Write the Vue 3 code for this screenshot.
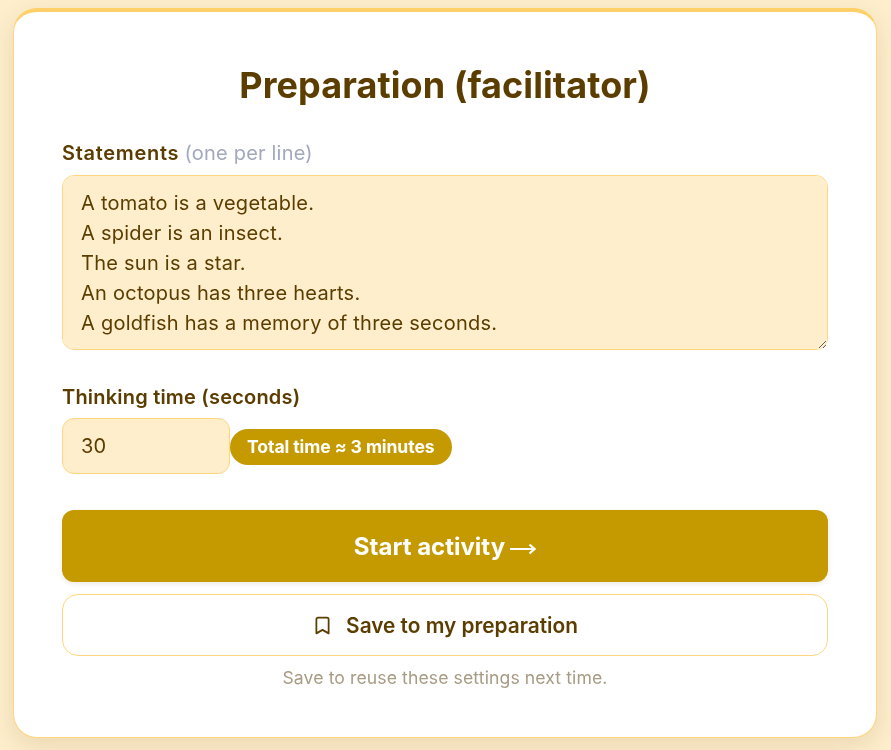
<script setup>
import { ref } from 'vue'

const statements = ref(`A tomato is a vegetable.
A spider is an insect.
The sun is a star.
An octopus has three hearts.
A goldfish has a memory of three seconds.`)
const seconds = ref(30)
</script>

<template>
  <div class="page">
    <main class="card">
      <h1>Preparation (facilitator)</h1>

      <label class="label" for="statements"><span class="wide">Statements</span> <span class="hint">(one per line)</span></label>
      <textarea id="statements" v-model="statements" class="field statements" spellcheck="false"></textarea>

      <label class="label time-label" for="seconds">Thinking time (seconds)</label>
      <div class="time-row">
        <input id="seconds" v-model="seconds" class="field seconds" type="text">
        <span class="badge">Total time ≈ 3 minutes</span>
      </div>

      <button class="start-btn">
        <span>Start activity</span>
        <svg class="arrow" width="26" height="12" viewBox="0 0 26 12" fill="none" stroke="currentColor" stroke-width="2.2">
          <path d="M0 6H24M19.5 1.5L24.5 6L19.5 10.5" />
        </svg>
      </button>
      <button class="save-btn">
        <svg width="21" height="21" viewBox="0 0 24 24" fill="none" stroke="currentColor" stroke-width="2" stroke-linecap="round" stroke-linejoin="round">
          <path d="M19 21l-7-4-7 4V5a2 2 0 0 1 2-2h10a2 2 0 0 1 2 2z" />
        </svg>
        <span>Save to my preparation</span>
      </button>
      <p class="note">Save to reuse these settings next time.</p>
    </main>
  </div>
</template>

<style scoped>
.page {
  min-height: 750px;
  box-sizing: border-box;
  padding: 8px 14px 12px 13px;
  background: #feeecb;
  font-family: "Inter", "Liberation Sans", sans-serif;
  color: #5c3d00;
}

.card {
  box-sizing: border-box;
  height: 730px;
  padding: 48px 48px 0;
  background: #fff;
  border: 1px solid #ffd67f;
  border-top: 4px solid #ffd067;
  border-radius: 24px;
  box-shadow: 0 8px 24px rgba(92, 61, 0, 0.12);
}

h1 {
  margin: 0 0 28px;
  font-size: 36px;
  line-height: 50px;
  font-weight: 700;
  text-align: center;
  letter-spacing: 0.08px;
}

.label {
  display: block;
  font-size: 20px;
  line-height: 30px;
  font-weight: 600;
  letter-spacing: 0.2px;
}

.wide {
  letter-spacing: 0.7px;
}

.hint {
  color: #a3a9bd;
  font-weight: 400;
  letter-spacing: 0.2px;
}

.field {
  box-sizing: border-box;
  display: block;
  background: #feeecb;
  border: 1px solid #ffd67f;
  border-radius: 12px;
  color: #5c3d00;
  font-family: inherit;
  font-size: 20px;
  line-height: 30px;
  letter-spacing: 0.25px;
  outline: none;
}

.statements {
  width: 100%;
  height: 175px;
  margin-top: 7px;
  padding: 12px 18px;
}

.time-label {
  margin-top: 32px;
}

.time-row {
  display: flex;
  align-items: center;
  margin-top: 6px;
}

.seconds {
  width: 168px;
  height: 56px;
  padding: 0 18px;
}

.badge {
  margin-top: 2px;
  padding: 0 17px;
  height: 36px;
  line-height: 36px;
  border-radius: 18px;
  background: #c49a00;
  color: #fff;
  font-size: 17.6px;
  font-weight: 700;
  letter-spacing: -0.1px;
}

.start-btn,
.save-btn {
  display: flex;
  align-items: center;
  justify-content: center;
  width: 100%;
  font-family: inherit;
  cursor: pointer;
}

.start-btn {
  gap: 5px;
  height: 72px;
  margin-top: 36px;
  border: none;
  border-radius: 12px;
  background: #c49a00;
  color: #fff;
  font-size: 24px;
  font-weight: 700;
  box-shadow: 0 2px 5px rgba(92, 61, 0, 0.1);
}

.arrow {
  margin-top: 6px;
}

.save-btn {
  gap: 13px;
  height: 62px;
  margin-top: 12px;
  background: #fff;
  border: 1px solid #ffd67f;
  border-radius: 16px;
  color: #5c3d00;
  font-size: 20.8px;
  font-weight: 600;
}

.note {
  margin: 9px 0 0;
  color: #a89b84;
  font-size: 17.6px;
  line-height: 26px;
  letter-spacing: 0.1px;
  text-align: center;
}
</style>
